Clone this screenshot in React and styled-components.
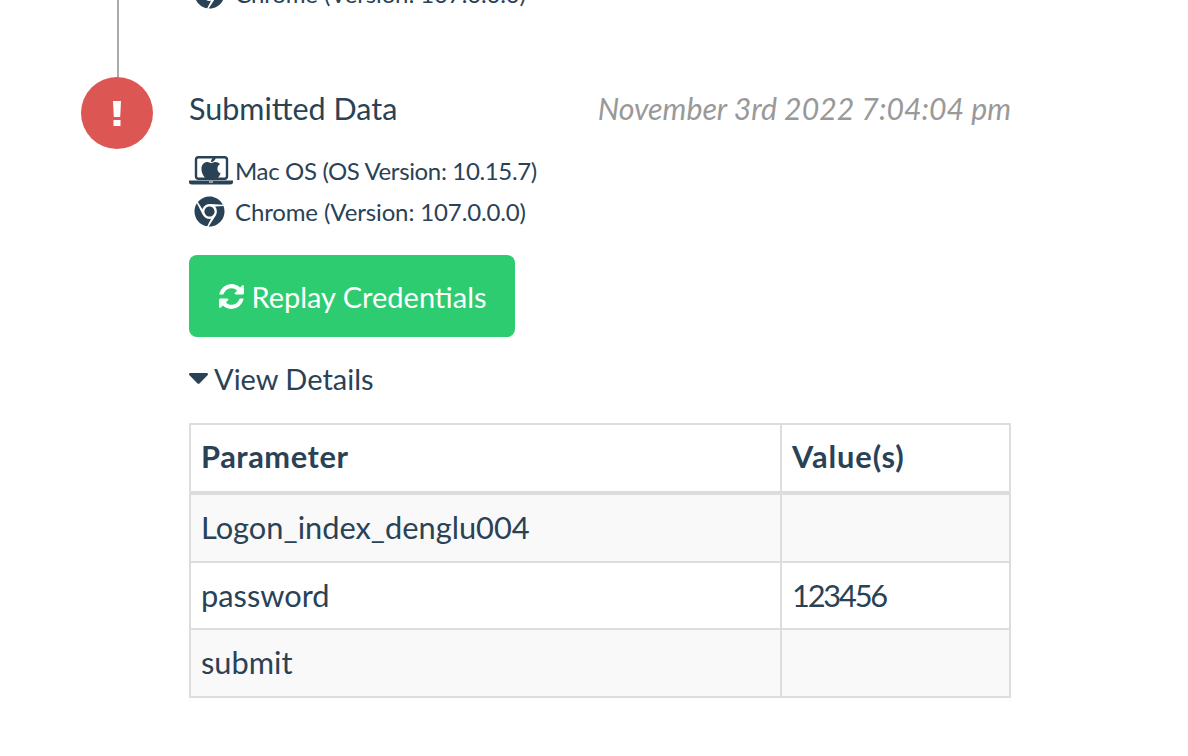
import React from "react";
import styled, { createGlobalStyle } from "styled-components";
import { FaChrome } from "react-icons/fa";

const Global = createGlobalStyle`
  html, body { margin: 0; padding: 0; background: #fff; height: 756px; overflow: hidden; }
  body { font-family: "Lato", "Noto Sans", sans-serif; color: #294256; }
`;

const Page = styled.div`
  width: 1188px;
  height: 756px;
  overflow: hidden;
  padding-left: 81px;
  box-sizing: border-box;
`;

const Entry = styled.section`
  display: grid;
  grid-template-columns: 72px 822px;
  column-gap: 36px;
`;

const Rail = styled.div`
  display: flex;
  flex-direction: column;
  align-items: center;
`;

const Line = styled.div`
  width: 2px;
  height: 77px;
  background: #aaa;
  margin-left: 1px;
`;

const Dot = styled.div`
  width: 72px;
  height: 72px;
  border-radius: 50%;
  background: #dc5753;
  color: #fff;
  display: flex;
  align-items: center;
  justify-content: center;
  flex: none;
`;

const Body = styled.div`
  display: flex;
  flex-direction: column;
`;

const TopLine = styled.div`
  height: 77px;
  overflow: hidden;
`;

const ClippedRow = styled.div`
  display: flex;
  align-items: center;
  gap: 10px;
  height: 31px;
  margin-top: -22px;
  padding-left: 5px;
  font-size: 24px;
  letter-spacing: -0.13px;
`;

const Header = styled.div`
  display: flex;
  justify-content: space-between;
  align-items: center;
  height: 62px;
  margin-bottom: 11px;
`;

const Title = styled.h3`
  margin: 0;
  font-size: 30.5px;
  font-weight: 400;
  line-height: 62px;
`;

const Time = styled.span`
  font-size: 30.25px;
  font-style: italic;
  color: #999;
`;

const Platform = styled.div`
  display: flex;
  align-items: center;
  height: 41px;
  font-size: 24px;
  letter-spacing: ${(p) => p.$tracking};
`;

const IconSlot = styled.span`
  width: 46px;
  display: flex;
  justify-content: flex-start;
  padding-left: ${(p) => p.$inset};
  box-sizing: border-box;
`;

const ReplayButton = styled.button`
  align-self: flex-start;
  margin-top: 23px;
  width: 326px;
  height: 82px;
  border: 0;
  border-radius: 8px;
  background: #2ecc71;
  color: #fff;
  font: inherit;
  font-size: 29px;
  display: flex;
  align-items: center;
  justify-content: center;
  gap: 5px;
`;

const Toggle = styled.div`
  display: flex;
  align-items: center;
  gap: 6px;
  height: 44px;
  margin-top: 19px;
  font-size: 29px;
`;

const Table = styled.table`
  margin-top: 23px;
  width: 822px;
  border-collapse: collapse;
  table-layout: fixed;
  font-size: 30.8px;
`;

const HeadCell = styled.th`
  border: 2px solid #ddd;
  border-bottom-width: 4px;
  height: 69px;
  padding: 0 10px 4px;
  text-align: left;
  font-weight: 700;
  letter-spacing: ${(p) => p.$tracking};
  box-sizing: border-box;
`;

const Row = styled.tr`
  background: ${(p) => (p.$striped ? "#f9f9f9" : "#fff")};
`;

const Cell = styled.td`
  border: 2px solid #ddd;
  height: ${(p) => (p.$tall ? "68.5px" : "67px")};
  padding: 0 10px;
  box-sizing: border-box;
  letter-spacing: ${(p) => (p.$numeric ? "-2.2px" : "0")};
`;

const RefreshIcon = () => (
  <svg width="29" height="29" viewBox="0 0 1792 1792" fill="currentColor" aria-hidden="true">
    <path d="M1639 1056q0 5-1 7-64 268-268 434.5t-478 166.5q-146 0-282.5-55t-243.5-157l-129 129q-19 19-45 19t-45-19-19-45v-448q0-26 19-45t45-19h448q26 0 45 19t19 45-19 45l-137 137q71 66 161 102t187 36q134 0 250-65t186-179q11-17 53-117 8-23 30-23h192q13 0 22.5 9.5t9.5 22.5zm25-800v448q0 26-19 45t-45 19h-448q-26 0-45-19t-19-45 19-45l138-138q-148-137-349-137-134 0-250 65t-186 179q-11 17-53 117-8 23-30 23h-199q-13 0-22.5-9.5t-9.5-22.5v-7q65-268 270-434.5t480-166.5q146 0 284 55.5t245 156.5l130-129q19-19 45-19t45 19 19 45z" />
  </svg>
);

const CaretIcon = () => (
  <svg width="19" height="11" viewBox="0 0 19 11" fill="currentColor" aria-hidden="true">
    <path d="M1.4 0h16.2q1.4 0 1.4 1.2 0 .6-.5 1l-8 8.2q-1 .9-2 0l-8-8.2q-.5-.4-.5-1Q0 0 1.4 0z" />
  </svg>
);

const AlertIcon = () => (
  <svg width="8" height="25" viewBox="0 0 8 25" fill="#fff" aria-hidden="true">
    <path d="M0 0h8l-.8 16h-6.4z" />
    <rect x="0.5" y="19" width="7" height="6" />
  </svg>
);

const MacIcon = () => (
  <svg width="44" height="30" viewBox="0 0 44 30" aria-hidden="true">
    <rect x="7" y="1.2" width="31" height="21.6" rx="2.5" fill="none" stroke="currentColor" strokeWidth="2.4" />
    <path d="M0 24.5h44v1.5q0 2.5-3 2.5h-38q-3 0-3-2.5z" fill="currentColor" />
    <rect x="20" y="25.5" width="4" height="1" fill="#fff" />
    <svg x="12" y="-1" width="20" height="26" viewBox="0 0 384 512" fill="currentColor">
      <path d="M318.7 268.7c-.2-36.7 16.4-64.4 50-84.8-18.8-26.9-47.2-41.7-84.7-44.6-35.5-2.8-74.3 20.7-88.5 20.7-15 0-49.4-19.7-76.4-19.7C63.3 141.2 4 184.8 4 273.5q0 39.3 14.4 81.2c12.8 36.7 59 126.7 107.2 125.2 25.2-.6 43-17.9 75.8-17.9 31.8 0 48.3 17.9 76.4 17.9 48.6-.7 90.4-82.5 102.6-119.3-65.2-30.7-61.7-90-61.7-91.9zm-56.6-164.2c27.3-32.4 24.8-61.9 24-72.5-24.1 1.4-52 16.4-67.9 34.9-17.5 19.8-27.8 44.3-25.6 71.9 26.1 2 49.9-11.4 69.5-34.3z" />
    </svg>
  </svg>
);

const rows = [
  ["Logon_index_denglu004", ""],
  ["password", "123456"],
  ["submit", ""],
];

export default function App() {
  return (
    <Page>
      <Global />
      <Entry>
        <Rail>
          <Line />
          <Dot><AlertIcon /></Dot>
        </Rail>
        <Body>
          <TopLine>
            <ClippedRow><FaChrome size={31} />Chrome (Version: 107.0.0.0)</ClippedRow>
          </TopLine>
          <Header>
            <Title>Submitted Data</Title>
            <Time>November 3rd 2022 7:04:04 pm</Time>
          </Header>
          <Platform $tracking="-0.35px"><IconSlot $inset="0"><MacIcon /></IconSlot>Mac OS (OS Version: 10.15.7)</Platform>
          <Platform $tracking="-0.13px"><IconSlot $inset="5px"><FaChrome size={31} /></IconSlot>Chrome (Version: 107.0.0.0)</Platform>
          <ReplayButton><RefreshIcon />Replay Credentials</ReplayButton>
          <Toggle><CaretIcon />View Details</Toggle>
          <Table>
            <colgroup>
              <col style={{ width: 591 }} />
              <col />
            </colgroup>
            <thead>
              <tr>
                <HeadCell $tracking="0.55px">Parameter</HeadCell>
                <HeadCell $tracking="0.9px">Value(s)</HeadCell>
              </tr>
            </thead>
            <tbody>
              {rows.map(([k, v], i) => (
                <Row key={k} $striped={i % 2 === 0}>
                  <Cell $tall={i % 2 === 0}>{k}</Cell>
                  <Cell $tall={i % 2 === 0} $numeric={/^\d+$/.test(v)}>{v}</Cell>
                </Row>
              ))}
            </tbody>
          </Table>
        </Body>
      </Entry>
    </Page>
  );
}
